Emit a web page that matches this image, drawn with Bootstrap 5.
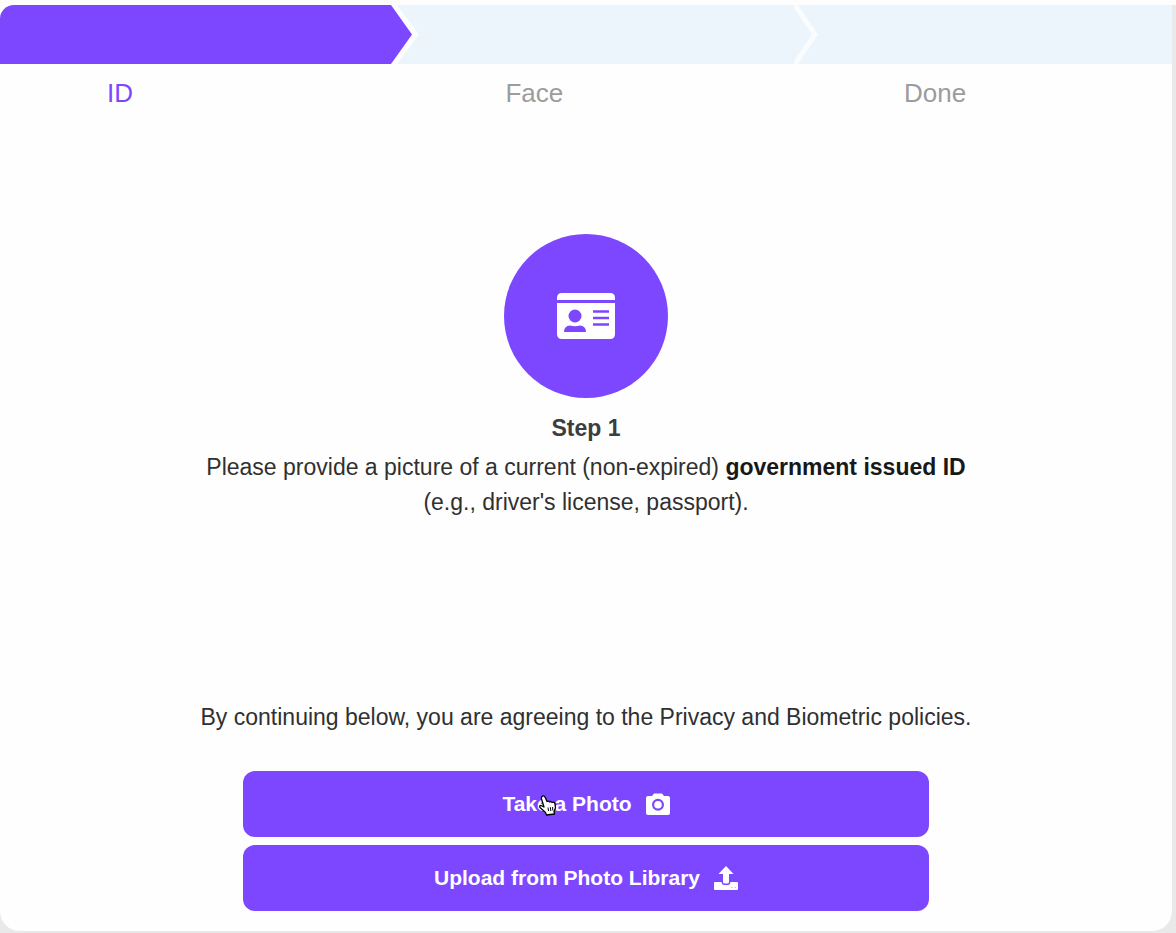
<!DOCTYPE html>
<html lang="en">
<head>
<meta charset="utf-8">
<meta name="viewport" content="width=device-width, initial-scale=1">
<title>Identity verification</title>
<link href="https://cdn.jsdelivr.net/npm/bootstrap@5.3.0/dist/css/bootstrap.min.css" rel="stylesheet">
<style>
  :root { --brand: #7c47fe; --track: #ecf4fc; }
  body { background: #e9e9e9; color: #303030; font-family: "Liberation Sans", Arial, sans-serif; font-size: 23px; line-height: 36px; }
  .page-top { border-top: 5px solid #fdfdfd; padding: 0 4px 2px 0; }
  .verify-card { background: #fefefe; border-radius: 0 0 20px 20px; overflow: hidden; }
  .steps { height: 59px; background: linear-gradient(90deg, #fefefe 33%, var(--track) 33%); }
  .steps svg { height: 59px; width: 28px; flex: none; }
  .step-current { flex: 0 0 33.3333%; background: var(--brand); border-top-left-radius: 14px; }
  .step-next { flex: 0 0 32%; }
  .step-labels { display: grid; grid-template-columns: repeat(3, 34%); padding-top: 13px; font-size: 26px; line-height: 32px; color: #9c9c9c; }
  .step-labels > div { padding-left: 107px; }
  .step-labels .current { color: var(--brand); }
  .id-circle { width: 164px; height: 164px; background: var(--brand); margin-top: 125px; }
  .step-title { font-size: 23px; line-height: 36px; font-weight: 700; color: #3d3d3d; margin: 12px 0 4px; }
  .intro { line-height: 35px; }
  .intro strong { color: #181818; }
  .actions { width: 100%; max-width: 686px; }
  .btn-brand { --bs-btn-bg: var(--brand); --bs-btn-color: #fff; --bs-btn-hover-bg: #6c39ea; --bs-btn-hover-color: #fff; --bs-btn-active-bg: #6030d8; --bs-btn-active-color: #fff; --bs-btn-border-width: 0; --bs-btn-border-radius: 12px; --bs-btn-font-weight: 700; --bs-btn-font-size: 21px; height: 66px; gap: 14px; }
  .hand { position: absolute; left: 50%; top: 50%; margin: -9px 0 0 -48px; }
</style>
</head>
<body>
<div class="page-top min-vh-100 d-flex">
  <main class="verify-card flex-grow-1 d-flex flex-column align-items-center pb-3">
    <div class="steps d-flex w-100">
      <div class="step-current"></div>
      <svg viewBox="0 0 28 59" aria-hidden="true"><path d="M0 0H6L28 29.5L6 59H0Z" fill="#fcfdfe"/><path d="M0 0L21 29.5L0 59Z" fill="#7c47fe"/></svg>
      <div class="step-next"></div>
      <svg viewBox="0 0 28 59" aria-hidden="true"><path d="M1 0L21 29.5L1 59" fill="none" stroke="#fafdff" stroke-width="5"/></svg>
    </div>
    <div class="step-labels w-100">
      <div class="current">ID</div><div>Face</div><div>Done</div>
    </div>

    <div class="id-circle rounded-circle d-flex align-items-center justify-content-center">
      <svg width="60" height="46" viewBox="0 0 60 46" aria-hidden="true">
        <path d="M1 7V5Q1 0 6 0H54Q59 0 59 5V7Z" fill="#fff"/>
        <path d="M1 10H59V41Q59 46 54 46H6Q1 46 1 41Z" fill="#fff"/>
        <circle cx="19" cy="23" r="6.500" fill="#7c47fe"/>
        <path d="M8 39Q8 33 14 32.500Q19 34 24 32.500Q30 33 30 39Z" fill="#7c47fe"/>
        <path d="M37 18.500H53M37 25H53M37 31.500H53" stroke="#7c47fe" stroke-width="2.500"/>
      </svg>
    </div>
    <h1 class="step-title">Step 1</h1>
    <p class="intro text-center mb-0">Please provide a picture of a current (non-expired) <strong>government issued ID</strong><br>(e.g., driver's license, passport).</p>

    <p class="mt-auto mb-0 pb-1 text-center">By continuing below, you are agreeing to the Privacy and Biometric policies.</p>
    <div class="actions d-grid gap-2 mt-4 pt-2 mb-1">
      <button type="button" class="btn btn-brand position-relative d-flex align-items-center justify-content-center">
        <span>Take a Photo</span>
        <svg width="24" height="22" viewBox="0 0 24 22" aria-hidden="true"><path fill="#fff" fill-rule="evenodd" d="M2 3H6L8 0.500H16L18 3H22Q24 3 24 5V20Q24 22 22 22H2Q0 22 0 20V5Q0 3 2 3ZM12 5.800A6 6 0 1 0 12 17.800A6 6 0 1 0 12 5.800ZM12 8A3.800 3.800 0 1 1 12 15.600A3.800 3.800 0 1 1 12 8Z"/></svg>
        <svg class="hand" width="20" height="21" viewBox="0 0 20 21" aria-hidden="true"><path d="M4 1.500Q5.500 0 7 2L9 6.500Q10.500 5.500 11.500 7Q13 5.800 14 7.500Q16.500 6.500 17 9L17.500 13L16 16.500L16.500 19L8.500 20L7.500 17.500L2 12.500Q1 10.500 3 10.500L6 12L3.500 4Q3 2.500 4 1.500Z" fill="#fff" stroke="#000" stroke-width="1.300" stroke-linejoin="round"/><path d="M10 12.500L10.500 16M12.300 12.200L12.800 16M14.600 12L14.800 15.500" stroke="#000"/></svg>
      </button>
      <button type="button" class="btn btn-brand d-flex align-items-center justify-content-center">
        <span>Upload from Photo Library</span>
        <svg width="24" height="24" viewBox="0 0 24 24" aria-hidden="true"><path fill="#fff" d="M12 0L19.500 8H15V16Q15 17.500 13.500 17.500H10.500Q9 17.500 9 16V8H4.500Z"/><path fill="#fff" d="M1 16H7.500Q8 19 10 19H14Q16 19 16.500 16H23Q24 16 24 17V23Q24 24 23 24H1Q0 24 0 23V17Q0 16 1 16Z"/><path d="M17 21.500H18.500M20.500 21.500H22" stroke="#cdbcff"/></svg>
      </button>
    </div>
  </main>
</div>
<script src="https://cdn.jsdelivr.net/npm/bootstrap@5.3.0/dist/js/bootstrap.bundle.min.js"></script>
</body>
</html>
